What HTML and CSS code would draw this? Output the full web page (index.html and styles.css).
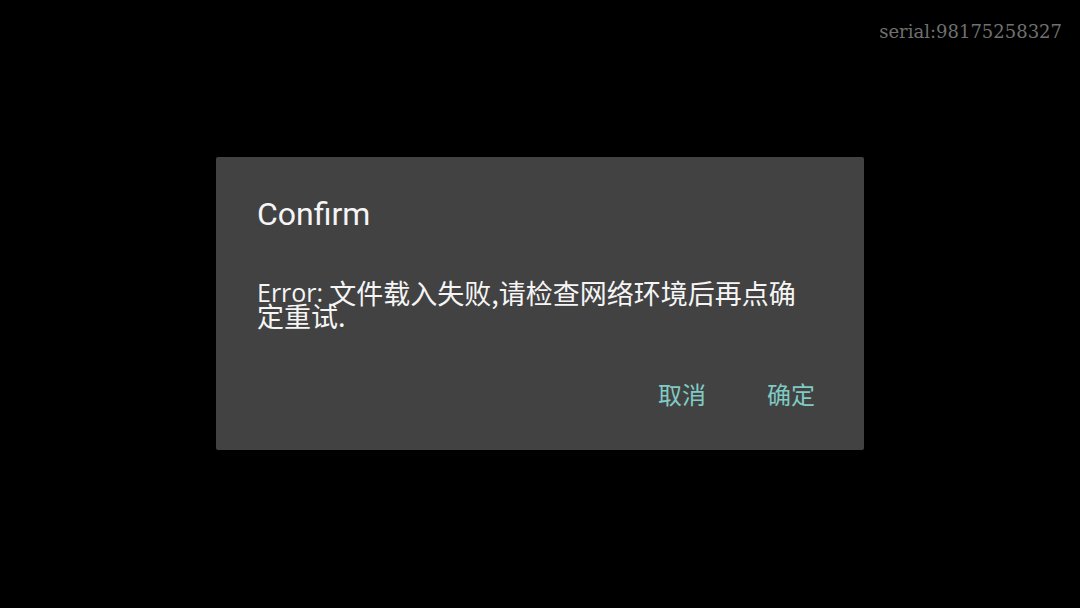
FILE: index.html
```html
<!DOCTYPE html>
<html lang="zh">
<head>
<meta charset="utf-8">
<title>Confirm</title>
<link rel="stylesheet" href="styles.css">
</head>
<body>
<div class="serial">serial:98175258327</div>
<div class="dialog">
  <h1 class="title">Confirm</h1>
  <p class="message"><span class="latin">Error:</span> 文件载入失败,请检查网络环境后再点确定重试.</p>
  <div class="actions">
    <span class="btn">取消</span>
    <span class="btn">确定</span>
  </div>
</div>
</body>
</html>
```
FILE: styles.css
```css
html, body {
  margin: 0;
  padding: 0;
}
body {
  width: 1080px;
  height: 608px;
  background: #000;
  display: flex;
  align-items: flex-start;
  justify-content: center;
  position: relative;
  overflow: hidden;
}
.serial {
  position: absolute;
  top: 23px;
  right: 18px;
  font-family: "DejaVu Serif", serif;
  font-size: 18px;
  line-height: 18px;
  color: #707070;
}
.dialog {
  box-sizing: border-box;
  width: 648px;
  height: 293px;
  margin-top: 157px;
  padding: 41px 41px 0 41px;
  background: #424242;
  border-radius: 2px;
  display: flex;
  flex-direction: column;
}
.title {
  margin: 0;
  font-family: Roboto, sans-serif;
  font-weight: 400;
  font-size: 32px;
  line-height: 32px;
  color: #f5f5f5;
}
.message {
  margin: 51px 0 0 0;
  padding-right: 8px;
  font-family: "Noto Sans CJK SC", sans-serif;
  font-size: 27px;
  line-height: 23px;
  color: #f5f5f5;
}
.latin {
  font-family: "Open Sans", sans-serif;
  font-size: 25px;
  line-height: 16px;
  vertical-align: 2px;
}
.actions {
  margin-top: 55px;
  padding-right: 8px;
  display: flex;
  justify-content: flex-end;
  gap: 61px;
}
.btn {
  font-family: "Noto Sans CJK SC", sans-serif;
  font-size: 24px;
  line-height: 24px;
  color: #80cbc4;
}
```
